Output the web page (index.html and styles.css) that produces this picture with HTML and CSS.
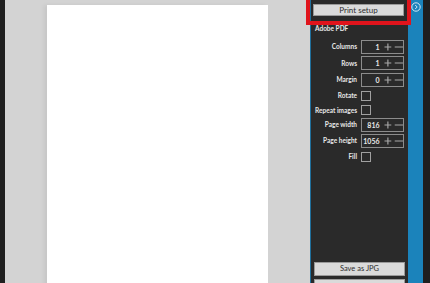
FILE: index.html
```html
<!DOCTYPE html>
<html>
<head>
<meta charset="utf-8">
<link rel="stylesheet" href="styles.css">
</head>
<body>
<div class="app">
  <div class="edge-left"></div>
  <div class="canvas">
    <div class="page"></div>
  </div>
  <aside class="panel">
    <button class="btn btn-setup">Print setup</button>
    <div class="panel-title">Adobe PDF</div>
    <div class="form">
      <div class="row row-a">
        <span class="label">Columns</span>
        <div class="spin"><span class="val">1</span><svg class="pm" viewBox="0 0 20 8" width="20" height="8"><path d="M4 0.5v7M0.5 4h7M11 4h8.5" /></svg></div>
      </div>
      <div class="row row-a">
        <span class="label">Rows</span>
        <div class="spin"><span class="val">1</span><svg class="pm" viewBox="0 0 20 8" width="20" height="8"><path d="M4 0.5v7M0.5 4h7M11 4h8.5" /></svg></div>
      </div>
      <div class="row row-a">
        <span class="label">Margin</span>
        <div class="spin"><span class="val">0</span><svg class="pm" viewBox="0 0 20 8" width="20" height="8"><path d="M4 0.5v7M0.5 4h7M11 4h8.5" /></svg></div>
      </div>
      <div class="row row-b">
        <span class="label">Rotate</span>
        <span class="check"></span>
      </div>
      <div class="row row-c">
        <span class="label">Repeat images</span>
        <span class="check"></span>
      </div>
      <div class="row row-d">
        <span class="label">Page width</span>
        <div class="spin"><span class="val">816</span><svg class="pm" viewBox="0 0 20 8" width="20" height="8"><path d="M4 0.5v7M0.5 4h7M11 4h8.5" /></svg></div>
      </div>
      <div class="row row-e">
        <span class="label">Page height</span>
        <div class="spin"><span class="val">1056</span><svg class="pm" viewBox="0 0 20 8" width="20" height="8"><path d="M4 0.5v7M0.5 4h7M11 4h8.5" /></svg></div>
      </div>
      <div class="row row-e">
        <span class="label">Fill</span>
        <span class="check"></span>
      </div>
    </div>
    <div class="actions">
      <button class="btn btn-action">Save as JPG</button>
      <button class="btn btn-action"></button>
    </div>
  </aside>
  <div class="rail">
    <svg class="rail-icon" viewBox="0 0 10 10" width="10" height="10"><circle cx="5" cy="5" r="4.2"/><path d="M4.2 3l2 2-2 2"/></svg>
  </div>
  <div class="edge-right"></div>
  <div class="highlight"></div>
</div>
</body>
</html>
```
FILE: styles.css
```css
* { box-sizing: border-box; }
html, body { margin: 0; padding: 0; }
body {
  width: 430px;
  height: 283px;
  overflow: hidden;
  background: #1f1f1f;
  font-family: "Lato", "Open Sans", sans-serif;
}
.app {
  position: relative;
  display: flex;
  width: 430px;
  height: 283px;
}
.edge-left {
  width: 5px;
  background: #1f1f1f;
}
.canvas {
  width: 305px;
  background: #d3d3d3;
  padding: 5px 0 0 42px;
  overflow: hidden;
}
.page {
  width: 221px;
  height: 300px;
  background: #ffffff;
  box-shadow: -3px 0 4px rgba(0,0,0,0.06);
}
.panel {
  width: 98px;
  background: #2a2a2a;
  border-left: 1px solid #1f6f9c;
  display: flex;
  flex-direction: column;
  overflow: hidden;
}
.btn {
  font-family: "Lato", "Open Sans", sans-serif;
  background: #dadada;
  border: 1px solid #9a9a9a;
  color: #2e2e2e;
  padding: 0;
  display: flex;
  align-items: center;
  justify-content: center;
}
.btn-setup {
  margin: 4px 4px 0 2px;
  height: 15px;
  font-size: 8px;
}
.panel-title {
  margin: 9px 0 0 4px;
  font-size: 6.5px;
  font-weight: 700;
  color: #e8e8e8;
  line-height: 8px;
}
.form {
  margin-top: 5.5px;
  display: flex;
  flex-direction: column;
}
.row {
  display: grid;
  grid-template-columns: 46px 43px;
  column-gap: 4px;
  align-items: center;
}
.row-a { height: 16.5px; }
.row-b { height: 15px; }
.row-c { height: 14px; }
.row-d { height: 15.5px; }
.row-e { height: 16px; }
.label {
  text-align: right;
  font-size: 6.5px;
  font-weight: 700;
  color: #e8e8e8;
  white-space: nowrap;
}
.spin {
  height: 14px;
  border: 1px solid #8c8c8c;
  display: flex;
  align-items: center;
}
.val {
  width: 18px;
  text-align: right;
  font-size: 7px;
  font-weight: 700;
  color: #e8e8e8;
}
.pm {
  margin-left: 4px;
  fill: none;
  stroke: #a8a8a8;
  stroke-width: 1.2;
}
.check {
  width: 10px;
  height: 10px;
  border: 1px solid #a0a0a0;
}
.actions {
  margin-top: 97px;
  display: flex;
  flex-direction: column;
  gap: 3px;
}
.btn-action {
  margin: 0 3px 0 3px;
  height: 14px;
  font-size: 7.5px;
}
.rail {
  width: 15px;
  background: #1b83bb;
  display: flex;
  justify-content: center;
  padding-top: 2px;
}
.rail-icon {
  fill: none;
  stroke: #e8f2f8;
  stroke-width: 0.9;
}
.edge-right {
  width: 7px;
  background: #1f1f1f;
}
.highlight {
  position: absolute;
  left: 306px;
  top: -4px;
  width: 105px;
  height: 29px;
  border: 4px solid #e0141c;
  pointer-events: none;
}
```
